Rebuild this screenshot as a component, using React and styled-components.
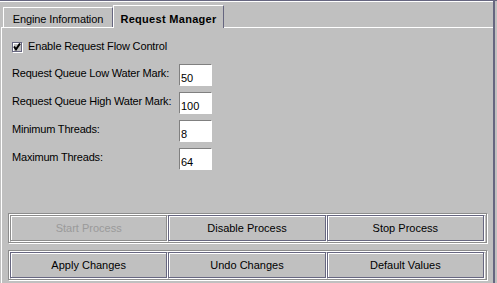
import React from 'react'
import styled, { createGlobalStyle } from 'styled-components'

const GlobalStyle = createGlobalStyle`
  html, body {
    margin: 0;
    padding: 0;
    background: #c0c0c0;
  }
  body {
    font-family: "Liberation Sans", Arial, sans-serif;
    font-size: 11px;
    line-height: 13px;
    color: #000;
  }
`

const Window = styled.div`
  width: 497px;
  height: 283px;
  box-sizing: border-box;
  border-top: 1px solid #666680;
  display: flex;
  overflow: hidden;
`

const Pane = styled.div`
  width: 493px;
  display: flex;
  flex-direction: column;
  border-top: 1px solid #fff;
`

const Edge = styled.div`
  width: 2px;
  background: #666680;
`

const TabStrip = styled.div`
  height: 25px;
  display: flex;
  align-items: flex-end;
  padding-left: 3px;
`

const Tab = styled.div`
  box-sizing: border-box;
  width: ${p => (p.$active ? 111 : 110)}px;
  height: ${p => (p.$active ? 23 : 20)}px;
  margin-bottom: ${p => (p.$active ? -1 : 0)}px;
  padding-top: ${p => (p.$active ? 7 : 5)}px;
  border-top: 1px solid #fff;
  border-left: 1px solid #fff;
  border-right: 1px solid #666680;
  background: #c0c0c0;
  text-align: center;
  font-weight: ${p => (p.$active ? 'bold' : 'normal')};
  letter-spacing: ${p => (p.$active ? '0.3px' : '-0.1px')};
  position: relative;
  z-index: ${p => (p.$active ? 1 : 0)};
`

const Content = styled.div`
  flex: 1;
  display: flex;
  flex-direction: column;
  border-top: 1px solid #fff;
  border-left: 1px solid #fff;
  margin-left: 1px;
`

const CheckRow = styled.label`
  display: flex;
  align-items: center;
  gap: 5px;
  margin: 13px 0 0 10px;
  height: 11px;
  letter-spacing: -0.15px;
`

const CheckBox = styled.span`
  box-sizing: border-box;
  width: 10px;
  height: 10px;
  border: 1px solid #666680;
  box-shadow: inset 1px 1px 0 #fff, 1px 1px 0 #fff;
  background: #c0c0c0;
  display: flex;
  align-items: center;
  justify-content: center;
  margin-right: 1px;
`

const Form = styled.div`
  display: grid;
  grid-template-columns: 167px 33px;
  grid-auto-rows: 22px;
  row-gap: 6px;
  margin: 12px 0 0 10px;
`

const Label = styled.span`
  padding-top: 3px;
  white-space: nowrap;
  letter-spacing: -0.2px;
`

const Field = styled.input`
  box-sizing: border-box;
  width: 33px;
  height: 22px;
  margin: 0;
  padding: 6px 0 0 1px;
  border: 1px solid;
  border-color: #808080 #fff #fff #808080;
  background: #fff;
  font: inherit;
  color: #000;
  -webkit-text-fill-color: #000;
  outline: none;
`

const ButtonArea = styled.div`
  margin-top: auto;
  display: flex;
  flex-direction: column;
  gap: 7px;
  padding: 0 0 3px 6px;
`

const Etched = styled.div`
  box-sizing: border-box;
  width: 479px;
  height: 30px;
  padding: 1px;
  border: 1px solid #8c8c8c;
  box-shadow: inset 1px 1px 0 #fff, 1px 1px 0 #fff;
  display: grid;
  grid-template-columns: repeat(3, 1fr);
`

const Button = styled.button`
  box-sizing: border-box;
  width: calc(100% - 1px);
  height: 26px;
  margin: 0;
  padding: 0;
  border: 1px solid ${p => (p.disabled ? '#8c8c8c' : '#666680')};
  box-shadow: inset 1px 1px 0 #fff, 1px 1px 0 #fff;
  background: #c0c0c0;
  font: inherit;
  color: ${p => (p.disabled ? '#9a9a9a' : '#000')};
  text-align: center;
  cursor: default;
`

const fields = [
  { label: 'Request Queue Low Water Mark:', value: '50' },
  { label: 'Request Queue High Water Mark:', value: '100' },
  { label: 'Minimum Threads:', value: '8' },
  { label: 'Maximum Threads:', value: '64' },
]

export default function App() {
  return (
    <>
      <GlobalStyle />
      <Window>
        <Pane>
          <TabStrip>
            <Tab>Engine Information</Tab>
            <Tab $active>Request Manager</Tab>
          </TabStrip>
          <Content>
            <CheckRow>
              <CheckBox>
                <svg width="8" height="8" viewBox="0 0 8 8">
                  <path d="M1 3.5 L3 6.3 L7 0.5" fill="none" stroke="#000" strokeWidth="2" />
                </svg>
              </CheckBox>
              Enable Request Flow Control
            </CheckRow>
            <Form>
              {fields.map(f => (
                <React.Fragment key={f.label}>
                  <Label>{f.label}</Label>
                  <Field readOnly defaultValue={f.value} />
                </React.Fragment>
              ))}
            </Form>
            <ButtonArea>
              <Etched>
                <Button disabled>Start Process</Button>
                <Button>Disable Process</Button>
                <Button>Stop Process</Button>
              </Etched>
              <Etched>
                <Button>Apply Changes</Button>
                <Button>Undo Changes</Button>
                <Button>Default Values</Button>
              </Etched>
            </ButtonArea>
          </Content>
        </Pane>
        <Edge />
      </Window>
    </>
  )
}
